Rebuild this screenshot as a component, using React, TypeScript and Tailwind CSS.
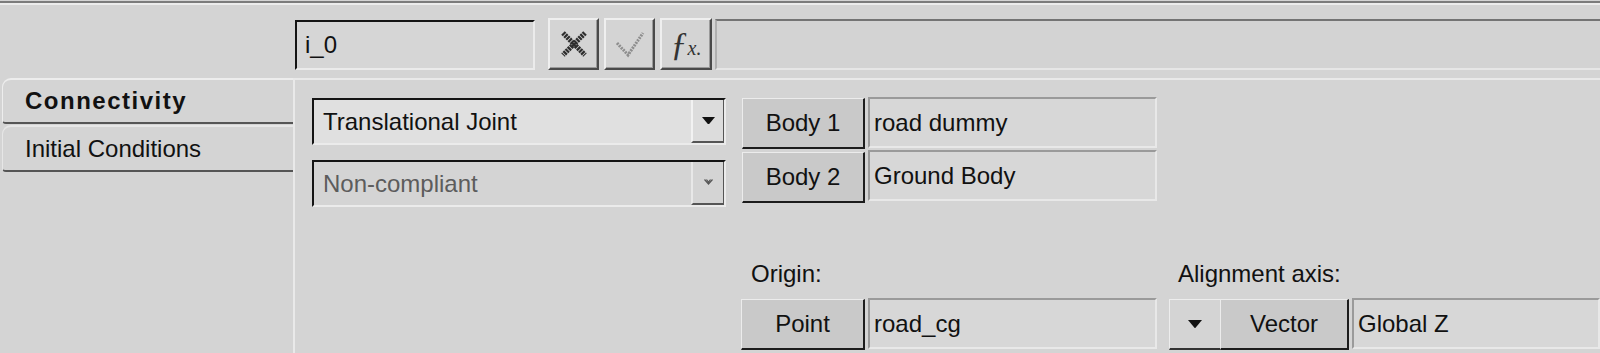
import React from "react";

const font = "font-['Liberation_Sans',Arial,sans-serif]";

const sunken =
  "border-2 border-t-[#141414] border-l-[#141414] border-r-[#ebebeb] border-b-[#ebebeb]";
const field =
  "bg-[#d7d7d7] border-2 border-t-[#9a9a9a] border-l-[#9a9a9a] border-r-[#e8e8e8] border-b-[#e8e8e8]";
const raised =
  "bg-[#c9c9c9] border-t border-l border-t-[#ececec] border-l-[#ececec] border-r-2 border-b-2 border-r-[#1c1c1c] border-b-[#1c1c1c]";
const tool =
  "bg-[#d4d4d4] border-t-2 border-l-2 border-t-[#efefef] border-l-[#efefef] border-r-2 border-b-2 border-r-[#4a4a4a] border-b-[#4a4a4a] shadow-[inset_-1px_-1px_0_#9a9a9a] flex items-center justify-center";

function Triangle({ size = 12 }: { size?: number }) {
  return (
    <svg width={size} height={size * 0.6} viewBox="0 0 10 6">
      <path d="M0 0 L10 0 L5 6 Z" fill="#111" />
    </svg>
  );
}

function Field({ text, className = "" }: { text: string; className?: string }) {
  return (
    <div className={`${field} h-[51px] flex items-center pl-[4px] ${className}`}>
      <span>{text}</span>
    </div>
  );
}

function Btn({ label, className = "" }: { label: string; className?: string }) {
  return (
    <div className={`${raised} h-[51px] flex items-center justify-center ${className}`}>
      {label}
    </div>
  );
}

export default function App() {
  return (
    <div className={`${font} w-[1600px] h-[353px] overflow-hidden bg-[#d4d4d4] text-[24px] text-[#111] leading-none`}>
      <div className="h-[2px] bg-[#7c7c7c] mt-[1px]" />
      <div className="h-[2px] bg-[#ececec]" />

      {/* top edit row */}
      <div className="flex items-start pt-[13px]">
        <div className={`${sunken} bg-[#d6d6d6] ml-[295px] mt-[2px] w-[240px] h-[50px] flex items-center pl-[8px]`}>
          <span>i_0</span>
        </div>
        <div className={`${tool} ml-[13px] w-[51px] h-[52px]`}>
          <svg width="28" height="28" viewBox="0 0 28 28">
            <path d="M3 3 L25 25 M25 3 L3 25" stroke="#2e2e2e" strokeWidth="5" strokeDasharray="2.2 0.8" />
          </svg>
        </div>
        <div className={`${tool} ml-[5px] w-[51px] h-[52px]`}>
          <svg width="30" height="28" viewBox="0 0 30 28">
            <path d="M2 13 L13 25 L28 3" stroke="#8e8e8e" strokeWidth="3" fill="none" strokeDasharray="2 1" />
          </svg>
        </div>
        <div className={`${tool} ml-[5px] w-[52px] h-[52px]`}>
          <span className="font-['Liberation_Serif',serif] italic text-[#333] text-[34px] leading-none">
            ƒ<span className="text-[20px]">x.</span>
          </span>
        </div>
        <div className="ml-[3px] mt-[1px] flex-1 h-[51px] bg-[#d3d3d3] border-t-2 border-l-2 border-t-[#747474] border-l-[#b0b0b0] border-b-2 border-b-[#e6e6e6]" />
      </div>

      {/* notebook */}
      <div className="flex mt-[8px]">
        <div className="w-[293px] pl-[2px] shrink-0">
          <div className="h-[46px] rounded-tl-[9px] rounded-bl-[4px] border-t-2 border-l border-t-[#ededed] border-l-[#ededed] border-b-2 border-b-[#555] flex items-center pl-[22px]">
            <span className="font-bold tracking-[1.5px]">Connectivity</span>
          </div>
          <div className="mt-[1px] h-[47px] rounded-tl-[9px] rounded-bl-[4px] border-t-2 border-l border-t-[#e6e6e6] border-l-[#e6e6e6] border-b-2 border-b-[#555] flex items-center pl-[22px]">
            <span>Initial Conditions</span>
          </div>
        </div>

        <div className="flex-1 h-[280px] border-t-2 border-l-2 border-[#e9e9e9] pl-[17px] pt-[18px]">
          <div className="flex items-start">
            <div className="w-[414px] flex flex-col gap-[15px]">
              <div className={`${sunken} bg-[#e0e0e0] h-[47px] flex items-center`}>
                <span className="pl-[9px] flex-1">Translational Joint</span>
                <div className="w-[33px] h-full border-l-2 border-l-[#f2f2f2] border-b-2 border-b-[#555] border-r border-r-[#555] bg-[#dcdcdc] flex items-center justify-center">
                  <Triangle size={13} />
                </div>
              </div>
              <div className={`${sunken} bg-[#d4d4d4] h-[47px] flex items-center`}>
                <span className="pl-[9px] flex-1 text-[#5c5c5c]">Non-compliant</span>
                <div className="w-[33px] h-full border-l-2 border-l-[#e8e8e8] border-b-2 border-b-[#555] border-r border-r-[#555] flex items-center justify-center">
                  <svg width="9" height="7" viewBox="0 0 9 7">
                    <path d="M0.5 0.5 L4.5 5 L8.5 0.5 M2.5 0.5 L4.5 3 L6.5 0.5" fill="none" stroke="#555" strokeWidth="1.2" />
                  </svg>
                </div>
              </div>
            </div>
            <div className="ml-[16px] w-[123px] flex flex-col gap-[3px]">
              <Btn label="Body 1" />
              <Btn label="Body 2" />
            </div>
            <div className="ml-[3px] -mt-[1px] w-[289px] flex flex-col gap-[2px]">
              <Field text="road dummy" />
              <Field text="Ground Body" />
            </div>
          </div>

          <div className="flex mt-[53px]">
            <div className="w-[429px] shrink-0" />
            <div className="w-[416px] flex flex-col">
              <div className="h-[28px] flex items-center pl-[10px]">Origin:</div>
              <div className="flex mt-[11px]">
                <Btn label="Point" className="w-[124px]" />
                <Field text="road_cg" className="ml-[3px] w-[289px] -mt-[1px]" />
              </div>
            </div>
            <div className="ml-[12px] flex-1 flex flex-col">
              <div className="h-[28px] flex items-center pl-[9px]">Alignment axis:</div>
              <div className="flex mt-[11px]">
                <div className="w-[51px] h-[51px] bg-[#d4d4d4] border-l border-t border-l-[#ededed] border-t-[#ededed] border-b-2 border-b-[#333] flex items-center justify-center">
                  <Triangle size={14} />
                </div>
                <Btn label="Vector" className="w-[129px]" />
                <Field text="Global Z" className="ml-[3px] flex-1 -mt-[1px]" />
              </div>
            </div>
          </div>
        </div>
      </div>
    </div>
  );
}
